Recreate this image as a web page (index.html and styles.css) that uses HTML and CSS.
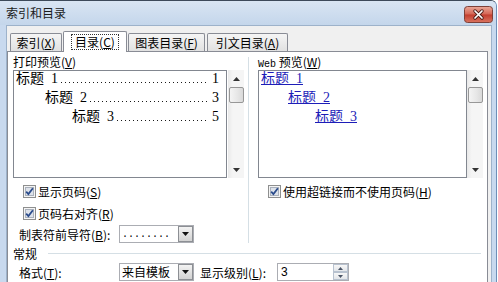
FILE: index.html
```html
<!DOCTYPE html>
<html>
<head>
  <meta charset="UTF-8">
  <title>索引和目录</title>
  <link rel="stylesheet" href="styles.css">
</head>
<body>
  <div class="win">
    <!--标题栏-->
    <div class="titlebar">
      <span class="title">索引和目录</span>
      <span class="close">
        <svg width="29" height="17" viewBox="0 0 29 17">
          <defs>
            <linearGradient id="cg" x1="0" y1="0" x2="0" y2="1">
              <stop offset="0" stop-color="#eaa999"/>
              <stop offset=".48" stop-color="#d46554"/>
              <stop offset=".52" stop-color="#c23d2e"/>
              <stop offset="1" stop-color="#da7460"/>
            </linearGradient>
          </defs>
          <rect x=".5" y=".5" width="28" height="16" rx="3" fill="url(#cg)" stroke="#7d4038"/>
          <path d="M11 5l7 7M18 5l-7 7" stroke="#4c1d17" stroke-width="3.4" stroke-linecap="round"/>
          <path d="M11 5l7 7M18 5l-7 7" stroke="#fff" stroke-width="1.7" stroke-linecap="round"/>
        </svg>
      </span>
    </div>

    <div class="client">
      <!--选项卡-->
      <ul class="tabs">
        <li class="tab t1">索引(<u>X</u>)</li>
        <li class="tab t2 active"><span class="focus">目录(<u>C</u>)</span></li>
        <li class="tab t3">图表目录(<u>F</u>)</li>
        <li class="tab t4">引文目录(<u>A</u>)</li>
      </ul>

      <div class="panel">
        <div class="top">
          <!--打印预览-->
          <div class="col left">
            <div class="lbl">打印预览(<u>V</u>)</div>
            <div class="pv">
              <div class="list">
                <div class="row l1"><span>标题&nbsp;&nbsp;1</span><i class="dots"></i><span>1</span></div>
                <div class="row l2"><span>标题&nbsp;&nbsp;2</span><i class="dots"></i><span>3</span></div>
                <div class="row l3"><span>标题&nbsp;&nbsp;3</span><i class="dots"></i><span>5</span></div>
              </div>
              <div class="sb">
                <span class="arr"><svg width="7" height="4"><polygon points="0,4 3.5,0 7,4" fill="#333"/></svg></span>
                <span class="thumb"></span>
                <span class="fill"></span>
                <span class="arr"><svg width="7" height="4"><polygon points="0,0 7,0 3.5,4" fill="#333"/></svg></span>
              </div>
            </div>
            <div class="chk">
              <svg width="13" height="13" viewBox="0 0 13 13"><rect x=".5" y=".5" width="12" height="12" fill="#f4f4f4" stroke="#8e8f8f"/><rect x="2.5" y="2.5" width="8" height="8" fill="#dde2ea" stroke="#aab1bc"/><path d="M3.2 6.6l2.2 2.5L9.9 3.2" fill="none" stroke="#2b4c8c" stroke-width="1.8"/></svg>
              <span>显示页码(<u>S</u>)</span>
            </div>
            <div class="chk second">
              <svg width="13" height="13" viewBox="0 0 13 13"><rect x=".5" y=".5" width="12" height="12" fill="#f4f4f4" stroke="#8e8f8f"/><rect x="2.5" y="2.5" width="8" height="8" fill="#dde2ea" stroke="#aab1bc"/><path d="M3.2 6.6l2.2 2.5L9.9 3.2" fill="none" stroke="#2b4c8c" stroke-width="1.8"/></svg>
              <span>页码右对齐(<u>R</u>)</span>
            </div>
            <div class="field leader">
              <span class="flbl">制表符前导符(<u>B</u>):</span>
              <span class="combo">
                <span class="val mono">........</span>
                <span class="drop"><svg width="7" height="4"><polygon points="0,0 7,0 3.5,4" fill="#111"/></svg></span>
              </span>
            </div>
          </div>

          <div class="vsep"></div>

          <!--Web预览-->
          <div class="col right">
            <div class="lbl"><span class="mono">Web</span> 预览(<u>W</u>)</div>
            <div class="pv">
              <div class="list">
                <div class="row l1"><span class="link">标题&nbsp;&nbsp;1</span></div>
                <div class="row l2"><span class="link">标题&nbsp;&nbsp;2</span></div>
                <div class="row l3"><span class="link">标题&nbsp;&nbsp;3</span></div>
              </div>
              <div class="sb">
                <span class="arr"><svg width="7" height="4"><polygon points="0,4 3.5,0 7,4" fill="#333"/></svg></span>
                <span class="thumb"></span>
                <span class="fill"></span>
                <span class="arr"><svg width="7" height="4"><polygon points="0,0 7,0 3.5,4" fill="#333"/></svg></span>
              </div>
            </div>
            <div class="chk">
              <svg width="13" height="13" viewBox="0 0 13 13"><rect x=".5" y=".5" width="12" height="12" fill="#f4f4f4" stroke="#8e8f8f"/><rect x="2.5" y="2.5" width="8" height="8" fill="#dde2ea" stroke="#aab1bc"/><path d="M3.2 6.6l2.2 2.5L9.9 3.2" fill="none" stroke="#2b4c8c" stroke-width="1.8"/></svg>
              <span>使用超链接而不使用页码(<u>H</u>)</span>
            </div>
          </div>
        </div>

        <!--常规-->
        <div class="group"><span>常规</span><i class="hr"></i></div>
        <div class="field format">
          <span class="flbl">格式(<u>T</u>):</span>
          <span class="combo">
            <span class="val">来自模板</span>
            <span class="drop"><svg width="7" height="4"><polygon points="0,0 7,0 3.5,4" fill="#111"/></svg></span>
          </span>
          <span class="lbl2">显示级别(<u>L</u>):</span>
          <span class="spin">
            <span class="num">3</span>
            <span class="btns">
              <span class="sbtn"><svg width="5" height="3"><polygon points="0,3 2.5,0 5,3" fill="#4a5566"/></svg></span>
              <span class="sbtn"><svg width="5" height="3"><polygon points="0,0 5,0 2.5,3" fill="#4a5566"/></svg></span>
            </span>
          </span>
        </div>
      </div>
    </div>
  </div>
</body>
</html>
```

FILE: styles.css
```css
html,body{margin:0;overflow:hidden;}
body{background:#fff;font:12px "Noto Sans CJK SC",sans-serif;color:#000;}
ul,li{margin:0;padding:0;list-style:none;}
svg{display:block;}

.win{
  display: flex;
  flex-direction: column;
  box-sizing: border-box;
  width: 497px;
  height: 282px;
  background: #c8d9ee;
  border-top: 1px solid #3d4a5a;
  border-right: 1px solid #6d8fb8;
  border-top-right-radius: 6px;
  overflow: hidden;
}
.titlebar{
  display: flex;
  height: 24px;
  padding-left: 6px;
  background: linear-gradient(#d9e5f3,#c4d6eb);
}
.title{
  line-height: 24px;
  color: #1b1b1b;
}
.close{
  width: 29px;
  height: 17px;
  margin: 5px 3px 0 auto;
}

.client{
  flex: 1;
  display: flex;
  flex-direction: column;
  margin: 0 4px 0 6px;
  border: 1px solid #9db2ca;
  border-bottom: none;
  background: #f0f0f0;
}

/* tabs */
.tabs{
  display: flex;
  align-items: flex-end;
  height: 25px;
  padding-left: 3px;
}
.tab{
  box-sizing: border-box;
  height: 18px;
  line-height: 17px;
  text-align: center;
  border: 1px solid #898c95;
  border-bottom: none;
  border-radius: 2px 2px 0 0;
  background: linear-gradient(#f5f5f5,#e1e1e1);
  margin-right: 1px;
}
.tab.t1{width: 52px;}
.tab.t2{width: 64px;}
.tab.t3{width: 77px;margin-right: 2px;}
.tab.t4{width: 81px;}
.tab.active{
  position: relative;
  z-index: 1;
  height: 21px;
  margin-bottom: -1px;
  padding-top: 1px;
  background: #fff;
}
.focus{
  display: inline-block;
  line-height: 14px;
  padding: 0 3px;
  border: 1px dotted #333;
}

.panel{
  flex: 1;
  margin-right: 3px;
  padding: 2px 3px 0 5px;
  border: 1px solid #898c95;
  border-bottom: none;
  background: #fff;
}
.top{
  display: flex;
}
.col.left{width: 231px;}
.col.right{width: 225px;}
.vsep{
  width: 1px;
  margin: 3px 9px 0 4px;
  background: #d5dfe5;
}
.lbl{
  height: 16px;
  line-height: 16px;
}
.mono{
  font: 10px "Liberation Mono",monospace;
}

/* preview boxes */
.pv{
  display: flex;
  height: 108px;
}
.list{
  box-sizing: border-box;
  width: 214px;
  border: 1px solid #828790;
  background: #fff;
}
.right .list{width: 209px;}
.left .sb{margin-left: 1px;}
.row{
  display: flex;
  height: 19px;
  padding: 0 7px 0 2px;
  font: 14px/15px "Liberation Serif","Noto Sans CJK SC",serif;
  white-space: nowrap;
}
.row.l2{padding-left: 31px;}
.row.l3{padding-left: 58px;}
.right .row.l2{padding-left: 29px;}
.right .row.l3{padding-left: 56px;}
.dots{
  flex: 1;
  height: 15px;
  margin: 0 3px 0 3px;
  background: linear-gradient(90deg,#1a1a1a 1px,transparent 1px) 0 11px/4px 1px repeat-x;
}
.link{
  color: #1d1db8;
  text-decoration: underline;
}

.sb{
  display: flex;
  flex-direction: column;
  align-items: center;
  width: 16px;
  background: linear-gradient(90deg,#e9e9e9,#f5f5f5 30%,#f5f5f5);
}
.sb .arr{
  display: flex;
  align-items: center;
  justify-content: center;
  height: 17px;
}
.sb .thumb{
  box-sizing: border-box;
  width: 15px;
  height: 16px;
  border: 1px solid #979797;
  border-radius: 2px;
  background: linear-gradient(90deg,#f4f4f4,#e6e6e6 60%,#d9d9d9);
}
.sb .fill{flex: 1;}

/* checkboxes */
.chk{
  display: flex;
  align-items: center;
  height: 16px;
  margin-top: 5px;
  padding-left: 10px;
}
.chk svg{margin-right: 2px;}
.chk.second{margin-top: 6px;}

/* combo rows */
.field{
  display: flex;
  align-items: center;
  height: 18px;
}
.field.leader{margin-top: 4px;}
.field.format{margin-top: 3px;}
.flbl{
  box-sizing: border-box;
  width: 106px;
  padding-left: 6px;
}
.combo{
  display: flex;
  box-sizing: border-box;
  width: 75px;
  height: 18px;
  border: 1px solid #abadb3;
  background: #fff;
}
.combo .val{
  flex: 1;
  padding-left: 2px;
  line-height: 16px;
}
.combo .val.mono{line-height: 18px;}
.drop{
  display: flex;
  align-items: center;
  justify-content: center;
  box-sizing: border-box;
  width: 15px;
  border: 1px solid #8c8f94;
  background: linear-gradient(#f3f3f3,#d2d2d2);
}
.lbl2{
  width: 77px;
  margin-left: 6px;
}
.spin{
  display: flex;
  box-sizing: border-box;
  width: 72px;
  height: 18px;
  border: 1px solid #abadb3;
  background: #fff;
}
.spin .num{
  flex: 1;
  padding-left: 3px;
  line-height: 16px;
  font-family: "Liberation Sans",sans-serif;
}
.spin .btns{
  display: flex;
  flex-direction: column;
  width: 15px;
}
.sbtn{
  flex: 1;
  display: flex;
  align-items: center;
  justify-content: center;
  border: 1px solid #b8c2cf;
  background: linear-gradient(#f7f7f7,#e3e6ea);
}

/* 常规 */
.group{
  display: flex;
  align-items: center;
  height: 14px;
  margin-top: 3px;
}
.group .hr{
  flex: 1;
  height: 1px;
  margin: 1px 3px 0 11px;
  background: #d5dfe5;
}
```
